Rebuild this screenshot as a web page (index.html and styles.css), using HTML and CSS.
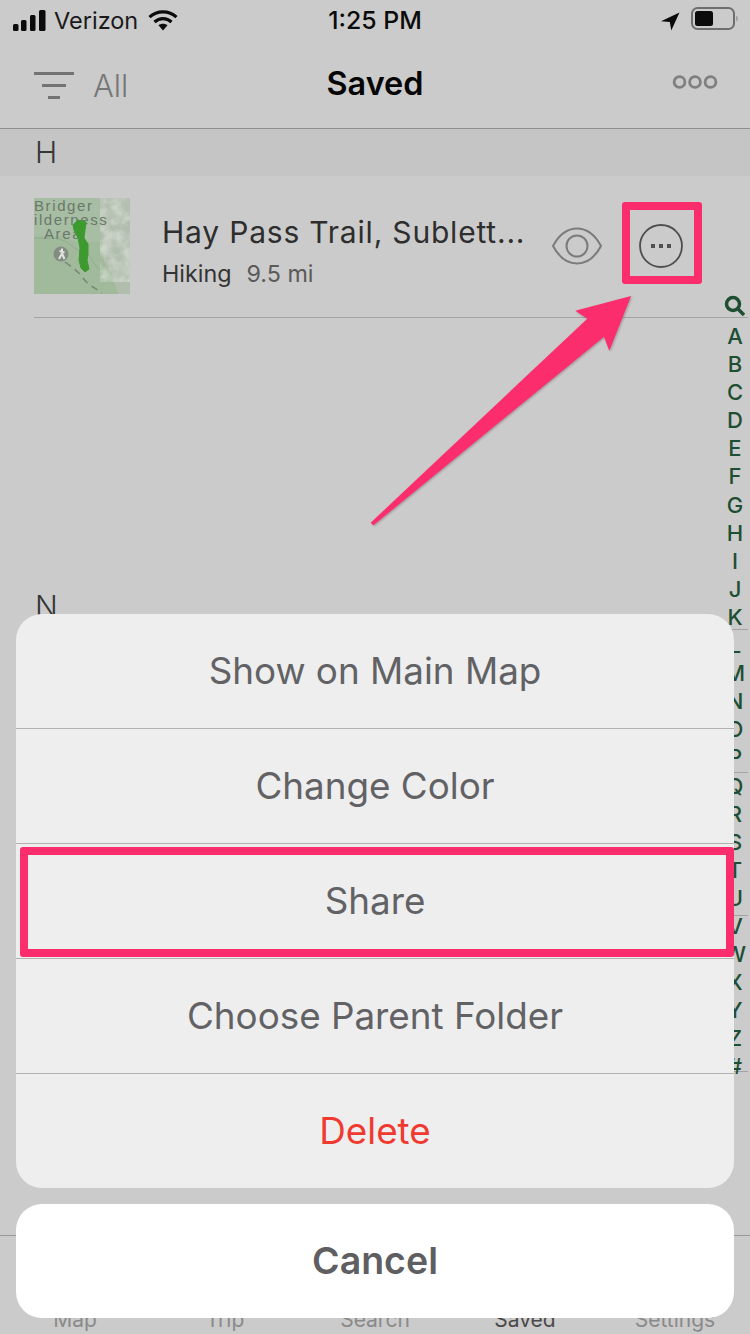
FILE: index.html
```html
<!DOCTYPE html>
<html lang="en">
<head>
<meta charset="utf-8">
<title>Saved</title>
<link rel="stylesheet" href="styles.css">
</head>
<body>
<div class="page">
  <header class="status">
    <div class="status-left">
      <svg class="signal" width="33" height="21" viewBox="0 0 33 21"><rect x="0" y="14" width="5.5" height="7" rx="1.5"/><rect x="8" y="10" width="5.5" height="11" rx="1.5"/><rect x="17" y="5" width="5.5" height="16" rx="1.5"/><rect x="26" y="0" width="6.5" height="21" rx="1.5"/></svg>
      <span class="carrier">Verizon</span>
      <svg class="wifi" width="30" height="22" viewBox="0 0 30 22"><path class="wifi-arc" d="M1.5 8.2C9 1 21 1 28.500 8.200"/><path class="wifi-arc" d="M6.500 13C11.500 8.500 18.500 8.500 23.500 13"/><path d="M10.500 16.300C13 14.300 17 14.300 19.500 16.300L15 21.500Z"/></svg>
    </div>
    <div class="clock">1:25 PM</div>
    <div class="status-right">
      <svg class="loc" width="19" height="19" viewBox="0 0 19 19"><path d="M18.500 .5 0 9.200l8.800.9 1.500 8.400z"/></svg>
      <svg class="battery" width="48" height="24" viewBox="0 0 48 24"><rect class="batt-frame" x="1" y="1" width="42" height="21" rx="5.500"/><rect x="4" y="4" width="18" height="15" rx="2.500"/><path class="batt-nub" d="M45.500 8.500c1.300 1 1.300 5 0 6z"/></svg>
    </div>
  </header>

  <nav class="nav">
    <div class="nav-left">
      <svg width="42" height="28" viewBox="0 0 42 28" class="filter"><path d="M1 1.500h40M9 13.500h24M15 25.500h12"/></svg>
      <span class="filter-label">All</span>
    </div>
    <h1 class="nav-title">Saved</h1>
    <svg class="nav-more" width="46" height="16" viewBox="0 0 46 16"><circle cx="7.500" cy="8" r="5.400"/><circle cx="23" cy="8" r="5.400"/><circle cx="38.500" cy="8" r="5.400"/></svg>
  </nav>

  <main class="list">
    <div class="section section-h">H</div>
    <article class="row">
      <svg class="thumb" width="96" height="96" viewBox="0 0 96 96">
        <defs>
          <filter id="mottle" x="0" y="0" width="100%" height="100%">
            <feTurbulence type="fractalNoise" baseFrequency="0.09" numOctaves="3" seed="4"/>
            <feColorMatrix values="0 0 0 0 .76  0 0 0 0 .79  0 0 0 0 .74  1.800 0 0 0 -.55"/>
          </filter>
        </defs>
        <rect width="96" height="96" fill="#a1ba9c"/>
        <path d="M0 0h68v44H42L30 38H0z" fill="#a8bea4"/>
        <path d="M66 0h30v96H84L78 76 70 62 68 40z" fill="#b1bdad"/>
        <rect x="66" width="30" height="84" filter="url(#mottle)" class="thumb-noise"/>
        <path d="M0 40c12 1 22-2 32 4s12 10 18 10 8 12 16 18" class="thumb-contour"/>
        <path d="M31 64c8 6 14 10 18 16s12 10 19 15" class="thumb-trail"/>
        <circle cx="27" cy="56" r="7.500" fill="#828c80"/>
        <path d="M28 50.500v5l-3 5.500M28 55.500l2.500 5.500M25.500 53l5 1.500" class="thumb-hiker"/>
        <text x="0" y="13" class="thumb-text">Bridger</text>
        <text x="0" y="27" class="thumb-text">ilderness</text>
        <text x="10" y="41" class="thumb-text">Area</text>
        <path d="M39 27 44 22 52 24 51 32 50 40 54 46 54 56 53 62 55 71 51 74 47 70 45 62 46 50 44 40 40 32Z" class="thumb-track"/>
      </svg>
      <div class="row-text">
        <div class="row-title">Hay Pass Trail, Sublett...</div>
        <div class="row-sub"><span class="row-type">Hiking</span><span class="row-dist">9.5 mi</span></div>
      </div>
      <svg class="eye" width="50" height="38" viewBox="0 0 50 38"><path d="M1 19C8 6 17 1.500 25 1.500S42 6 49 19C42 32 33 36.500 25 36.500S8 32 1 19Z"/><circle cx="25" cy="19" r="10.500"/></svg>
      <svg class="more" width="44" height="44" viewBox="0 0 44 44"><circle cx="22" cy="22" r="21"/><rect x="12" y="20" width="4" height="4"/><rect x="20" y="20" width="4" height="4"/><rect x="28" y="20" width="4" height="4"/></svg>
    </article>
    <div class="section section-n">N</div>
    <div class="empty-row"></div>
    <div class="empty-row"></div>
    <div class="empty-row empty-tall"></div>
  </main>

  <footer class="tabs">
    <span class="tab">Map</span>
    <span class="tab">Trip</span>
    <span class="tab">Search</span>
    <span class="tab tab-active">Saved</span>
    <span class="tab">Settings</span>
  </footer>

  <aside class="index">
    <svg class="index-search" width="22" height="22" viewBox="0 0 22 22"><circle cx="9" cy="9" r="6.500"/><path d="M14 14l6 6"/></svg>
    <span>A</span><span>B</span><span>C</span><span>D</span><span>E</span><span>F</span><span>G</span><span>H</span><span>I</span><span>J</span><span>K</span><span>L</span><span>M</span><span>N</span><span>O</span><span>P</span><span>Q</span><span>R</span><span>S</span><span>T</span><span>U</span><span>V</span><span>W</span><span>X</span><span>Y</span><span>Z</span><span>#</span>
  </aside>

  <div class="sheet-wrap">
    <div class="sheet">
      <div class="sheet-item">Show on Main Map</div>
      <div class="sheet-item">Change Color</div>
      <div class="sheet-item sheet-share">Share</div>
      <div class="sheet-item">Choose Parent Folder</div>
      <div class="sheet-item sheet-delete">Delete</div>
    </div>
    <div class="cancel">Cancel</div>
  </div>

  <div class="mark mark-more"></div>
  <svg class="arrow" width="300" height="260" viewBox="0 0 300 260"><path d="M281 6 225.300 20.700 237.300 28.700 20.700 232.700 23.300 235.300 254 46.700 259.300 60.700Z"/></svg>
</div>
</body>
</html>
```
FILE: styles.css
```css
*, *::after { box-sizing: border-box; }
html, body { margin: 0; padding: 0; }
body { background: #cbcbcb; font-family: Inter, "Liberation Sans", sans-serif; }
.page {
  position: relative;
  width: 750px;
  height: 1334px;
  overflow: hidden;
  background: #cbcbcb;
  display: flex;
  flex-direction: column;
}

/* status bar */
.status {
  height: 40px;
  display: grid;
  grid-template-columns: 1fr auto 1fr;
  align-items: center;
  padding: 0 13px;
  color: #0b0b0b;
}
.status-left { display: flex; align-items: center; }
.signal { fill: #0b0b0b; }
.carrier { font-size: 23.500px; margin-left: 8px; color: #1a1a1a; }
.wifi { margin-left: 10px; fill: #0b0b0b; }
.wifi-arc { fill: none; stroke: #0b0b0b; stroke-width: 3.200; }
.clock { font-size: 24.800px; font-weight: 500; }
.status-right { display: flex; align-items: center; justify-content: flex-end; margin-right: -2px; }
.loc { fill: #0b0b0b; margin-top: 2px; }
.battery { margin-left: 11px; fill: #0b0b0b; margin-top: -2px; }
.batt-frame { fill: none; stroke: #6e6e6e; stroke-width: 2; }
.batt-nub { fill: #777; }

/* nav */
.nav {
  height: 89px;
  position: relative;
  display: flex;
  align-items: center;
  justify-content: center;
  border-bottom: 1.500px solid #8f8f8f;
}
.nav-left {
  position: absolute;
  left: 33px;
  top: 27px;
  display: flex;
  align-items: center;
}
.filter { fill: none; stroke: #737373; stroke-width: 2.800; }
.filter-label { font-size: 31px; color: #767676; margin-left: 18px; font-weight: 300; }
.nav-title { margin: 0 0 2px; font-size: 32.400px; font-weight: 600; color: #050505; }
.nav-more {
  position: absolute;
  right: 32px;
  top: 34px;
  fill: none;
  stroke: #7f7f7f;
  stroke-width: 2.800;
}

/* list */
.list { flex: 1; display: flex; flex-direction: column; }
.section {
  font-size: 30px;
  color: #363636;
  padding-left: 35px;
  font-weight: 300;
}
.section-h { height: 47px; line-height: 47px; background: #c5c5c6; }
.row {
  height: 142px;
  margin-left: 34px;
  margin-right: 2px;
  padding-top: 22px;
  border-bottom: 1.500px solid #a3a3a3;
  display: flex;
  align-items: flex-start;
  position: relative;
}
.thumb { flex: none; }
.thumb-noise { opacity: .7; }
.thumb-contour { fill: none; stroke: #93ab90; stroke-width: 1; }
.thumb-trail { fill: none; stroke: #788678; stroke-width: 1.500; stroke-dasharray: 7 5; }
.thumb-hiker { fill: none; stroke: #e4e4e0; stroke-width: 2; }
.thumb-text { font-family: "Liberation Sans", sans-serif; font-size: 15px; letter-spacing: 1.600px; fill: #6a786a; }
.thumb-track { fill: #3d9a2e; stroke: #3d9a2e; stroke-width: 1; stroke-linejoin: round; }
.row-text { margin-left: 33px; padding-top: 15px; }
.row-title { margin-left: -1px; font-size: 30px; line-height: 38px; letter-spacing: .8px; color: #2e2e2e; white-space: nowrap; font-weight: 400; }
.row-sub { font-size: 23.300px; line-height: 30px; margin-top: 8px; margin-left: -1px; color: #333; display: flex; gap: 15px; }
.row-dist { color: #5a5a5a; }
.eye {
  position: absolute;
  left: 518px;
  top: 51px;
  fill: none;
  stroke: #7b7b7b;
  stroke-width: 2;
}
.more {
  position: absolute;
  left: 605px;
  top: 48px;
  fill: #4f4f4f;
}
.more circle { fill: none; stroke: #4f4f4f; stroke-width: 1.800; }

.section-n {
  height: 48px;
  line-height: 48px;
  margin-top: 264px;
  margin-left: 34px;
  margin-right: 2px;
  padding-left: 1px;
  font-weight: 300;
  border-bottom: 1.500px solid #a3a3a3;
}
.empty-row { height: 143px; margin-left: 34px; margin-right: 2px; border-bottom: 1.500px solid #a3a3a3; }
.empty-tall { height: 156px; }

/* tabs */
.tabs {
  height: 99px;
  border-top: 1.500px solid #9a9a9a;
  display: grid;
  grid-template-columns: repeat(5, 150px);
  align-items: end;
  justify-items: center;
  font-size: 21px;
  line-height: 28px;
  color: #8a8a8a;
}
.tab-active { color: #4a4a4a; }

/* side index */
.index {
  position: absolute;
  left: 721px;
  top: 295px;
  width: 28px;
  display: flex;
  flex-direction: column;
  align-items: center;
  font-size: 22px;
  line-height: 28.100px;
  font-weight: 500;
  color: #1f4f33;
}
.index-search { fill: none; stroke: #1f4f33; stroke-width: 3.500; height: 28px; margin-top: -3px; margin-bottom: 2px; }
.index span { display: block; }

/* action sheet */
.sheet-wrap {
  position: absolute;
  left: 16px;
  right: 16px;
  top: 614px;
  display: flex;
  flex-direction: column;
  gap: 16px;
}
.sheet {
  background: #eeeeef;
  border-radius: 26px;
  overflow: hidden;
}
.sheet-item {
  height: 115px;
  padding-bottom: 2px;
  display: flex;
  align-items: center;
  justify-content: center;
  font-size: 36.800px;
  color: #626265;
  border-bottom: 1.500px solid #b1b1b1;
}
.sheet-item:last-child { border-bottom: 0; height: 114px; }
.sheet-share { position: relative; }
.sheet-share::after {
  content: "";
  position: absolute;
  left: 4px;
  right: 0;
  top: 3px;
  height: 110px;
  border: 8px solid #fb2d6c;
  border-radius: 3px;
}
.sheet-delete { color: #f03a30; }
.cancel {
  height: 114px;
  padding-bottom: 2px;
  background: #fff;
  border-radius: 26px;
  display: flex;
  align-items: center;
  justify-content: center;
  font-size: 37.500px;
  font-weight: 600;
  color: #5f5f62;
}

/* annotations */
.mark { position: absolute; border: 8px solid #fb2d6c; border-radius: 3px; }
.mark-more { left: 622px; top: 202px; width: 80px; height: 82px; }
.arrow {
  position: absolute;
  left: 350px;
  top: 290px;
  fill: #fb2d6c;
  filter: drop-shadow(1px 1px 1px rgba(90, 40, 60, .35));
}
```
